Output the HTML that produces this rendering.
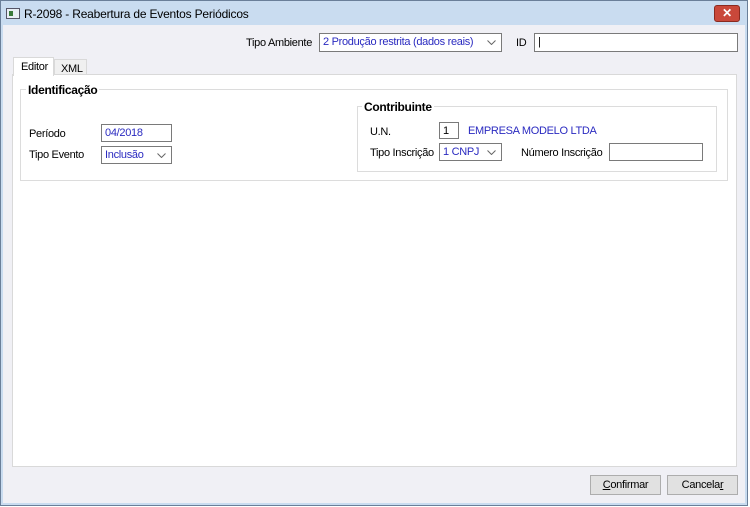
<!DOCTYPE html><html><head><style>
*{box-sizing:border-box;margin:0;padding:0}
body{width:750px;height:507px;background:#fff;font-family:"Liberation Sans",sans-serif;font-size:11px;letter-spacing:-0.3px;color:#000;position:relative;overflow:hidden}
.a{position:absolute}
.win{left:0;top:0;width:748px;height:506px;background:#c9dcf0;border:1px solid #6a7f99}
.body{left:3px;top:25px;width:742px;height:478px;background:#f0f0f5}
.panel{left:12px;top:74px;width:725px;height:393px;background:#fff;border:1px solid #d9d9d9}
.inp{background:#fff;border:1px solid #7a7a7a;color:#2a2ac0;padding:2px 3px;white-space:nowrap}
.grp{border:1px solid #dcdcdc}
.lg{background:#fff;font-weight:bold;padding:0 2px}
.btn{background:#e1e1e1;border:1px solid #adadad;text-align:center;line-height:19px}
.chev{position:absolute;right:5px;top:6px}
</style></head><body>
<div class="a win"></div>
<div class="a" style="left:6px;top:8px;width:14px;height:11px;background:#e8eef4;border:1px solid #556"><div style="margin:2px;width:4px;height:5px;background:#3a7a3a"></div></div>
<div class="a" style="left:24px;top:7px;font-size:12px;letter-spacing:-0.2px">R-2098 - Reabertura de Eventos Periódicos</div>
<div class="a" style="left:714px;top:5px;width:26px;height:17px;background:#c9483a;border:1px solid #8a2a20;border-radius:3px;color:#fff;font-weight:bold;text-align:center;line-height:15px;font-size:12px">✕</div>
<div class="a body"></div>
<div class="a" style="left:246px;top:37px">Tipo Ambiente</div>
<div class="a inp" style="left:319px;top:33px;width:183px;height:19px">2 Produção restrita (dados reais)<svg class="chev" width="9" height="5"><path d="M0.5 0.5L4.5 4.5L8.5 0.5" fill="none" stroke="#666"/></svg></div>
<div class="a" style="left:516px;top:37px">ID</div>
<div class="a inp" style="left:534px;top:33px;width:204px;height:19px;color:#000">|</div>
<div class="a" style="left:13px;top:57px;width:41px;height:19px;background:#fff;border:1px solid #d9d9d9;border-bottom:none;z-index:2;padding:3px 0 0 7px">Editor</div>
<div class="a" style="left:54px;top:59px;width:33px;height:16px;background:#f0f0f0;border:1px solid #d9d9d9;padding:3px 0 0 6px">XML</div>
<div class="a panel"></div>
<div class="a grp" style="left:20px;top:89px;width:708px;height:92px"></div>
<div class="a lg" style="left:26px;top:83px;font-size:12px">Identificação</div>
<div class="a" style="left:29px;top:128px">Período</div>
<div class="a inp" style="left:101px;top:124px;width:71px;height:18px">04/2018</div>
<div class="a" style="left:29px;top:149px">Tipo Evento</div>
<div class="a inp" style="left:101px;top:146px;width:71px;height:18px">Inclusão<svg class="chev" width="9" height="5"><path d="M0.5 0.5L4.5 4.5L8.5 0.5" fill="none" stroke="#666"/></svg></div>
<div class="a grp" style="left:357px;top:106px;width:360px;height:66px"></div>
<div class="a lg" style="left:362px;top:100px;font-size:12px">Contribuinte</div>
<div class="a" style="left:370px;top:126px">U.N.</div>
<div class="a inp" style="left:439px;top:122px;width:20px;height:17px;color:#000">1</div>
<div class="a" style="left:468px;top:125px;color:#2a2ac0">EMPRESA MODELO LTDA</div>
<div class="a" style="left:370px;top:147px">Tipo Inscrição</div>
<div class="a inp" style="left:439px;top:143px;width:63px;height:18px">1 CNPJ<svg class="chev" width="9" height="5"><path d="M0.5 0.5L4.5 4.5L8.5 0.5" fill="none" stroke="#666"/></svg></div>
<div class="a" style="left:521px;top:147px">Número Inscrição</div>
<div class="a inp" style="left:609px;top:143px;width:94px;height:18px"></div>
<div class="a btn" style="left:590px;top:475px;width:71px;height:20px"><u>C</u>onfirmar</div>
<div class="a btn" style="left:667px;top:475px;width:71px;height:20px">Cancela<u>r</u></div>
</body></html>
